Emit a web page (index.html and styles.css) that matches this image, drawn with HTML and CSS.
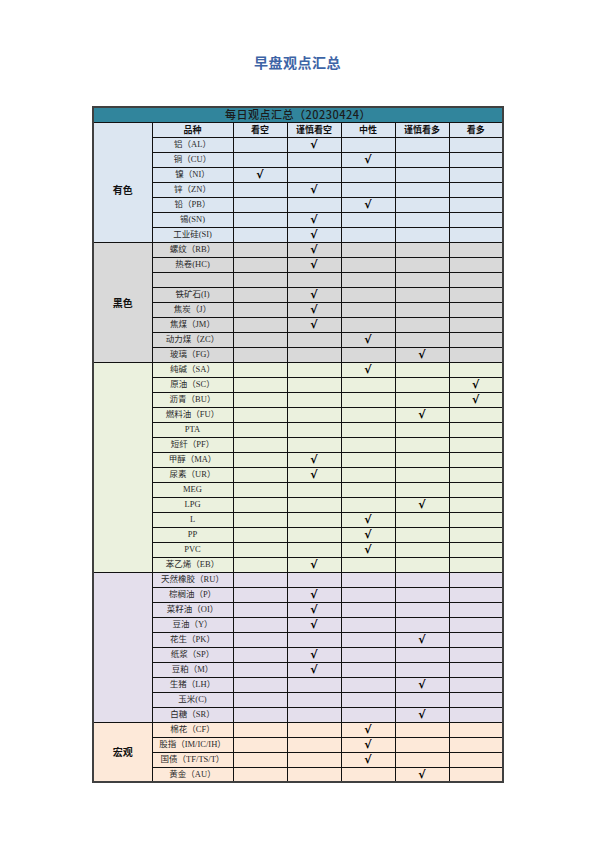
FILE: index.html
```html
<!DOCTYPE html>
<html lang="zh">
<head>
<meta charset="utf-8">
<title>早盘观点汇总</title>
<link rel="stylesheet" href="styles.css">
</head>
<body>
<div class="page">
  <h1 class="heading">早盘观点汇总</h1>
  <table class="summary">
    <colgroup>
      <col class="c-cat"><col class="c-prod"><col class="c-v"><col class="c-v"><col class="c-v"><col class="c-v"><col class="c-v">
    </colgroup>
    <thead>
      <tr class="title-row"><th colspan="7">每日观点汇总（20230424）</th></tr>
      <tr class="head-row">
        <th class="blank-head"></th><th>品种</th><th>看空</th><th>谨慎看空</th><th>中性</th><th>谨慎看多</th><th>看多</th>
      </tr>
    </thead>
    <tbody class="g-metal">
      <tr><td class="cat" rowspan="7">有色</td><td class="prod">铝（AL）</td><td></td><td>√</td><td></td><td></td><td></td></tr>
      <tr><td class="prod">铜（CU）</td><td></td><td></td><td>√</td><td></td><td></td></tr>
      <tr><td class="prod">镍（NI）</td><td>√</td><td></td><td></td><td></td><td></td></tr>
      <tr><td class="prod">锌（ZN）</td><td></td><td>√</td><td></td><td></td><td></td></tr>
      <tr><td class="prod">铅（PB）</td><td></td><td></td><td>√</td><td></td><td></td></tr>
      <tr><td class="prod">锡(SN)</td><td></td><td>√</td><td></td><td></td><td></td></tr>
      <tr><td class="prod">工业硅(SI)</td><td></td><td>√</td><td></td><td></td><td></td></tr>
    </tbody>
    <tbody class="g-black">
      <tr><td class="cat" rowspan="8">黑色</td><td class="prod">螺纹（RB）</td><td></td><td>√</td><td></td><td></td><td></td></tr>
      <tr><td class="prod">热卷(HC)</td><td></td><td>√</td><td></td><td></td><td></td></tr>
      <tr><td class="prod"></td><td></td><td></td><td></td><td></td><td></td></tr>
      <tr><td class="prod">铁矿石(I)</td><td></td><td>√</td><td></td><td></td><td></td></tr>
      <tr><td class="prod">焦炭（J）</td><td></td><td>√</td><td></td><td></td><td></td></tr>
      <tr><td class="prod">焦煤（JM）</td><td></td><td>√</td><td></td><td></td><td></td></tr>
      <tr><td class="prod">动力煤（ZC）</td><td></td><td></td><td>√</td><td></td><td></td></tr>
      <tr><td class="prod">玻璃（FG）</td><td></td><td></td><td></td><td>√</td><td></td></tr>
    </tbody>
    <tbody class="g-energy">
      <tr><td class="cat" rowspan="14"></td><td class="prod">纯碱（SA）</td><td></td><td></td><td>√</td><td></td><td></td></tr>
      <tr><td class="prod">原油（SC）</td><td></td><td></td><td></td><td></td><td>√</td></tr>
      <tr><td class="prod">沥青（BU）</td><td></td><td></td><td></td><td></td><td>√</td></tr>
      <tr><td class="prod">燃料油（FU）</td><td></td><td></td><td></td><td>√</td><td></td></tr>
      <tr><td class="prod">PTA</td><td></td><td></td><td></td><td></td><td></td></tr>
      <tr><td class="prod">短纤（PF）</td><td></td><td></td><td></td><td></td><td></td></tr>
      <tr><td class="prod">甲醇（MA）</td><td></td><td>√</td><td></td><td></td><td></td></tr>
      <tr><td class="prod">尿素（UR）</td><td></td><td>√</td><td></td><td></td><td></td></tr>
      <tr><td class="prod">MEG</td><td></td><td></td><td></td><td></td><td></td></tr>
      <tr><td class="prod">LPG</td><td></td><td></td><td></td><td>√</td><td></td></tr>
      <tr><td class="prod">L</td><td></td><td></td><td>√</td><td></td><td></td></tr>
      <tr><td class="prod">PP</td><td></td><td></td><td>√</td><td></td><td></td></tr>
      <tr><td class="prod">PVC</td><td></td><td></td><td>√</td><td></td><td></td></tr>
      <tr><td class="prod">苯乙烯（EB）</td><td></td><td>√</td><td></td><td></td><td></td></tr>
    </tbody>
    <tbody class="g-agri">
      <tr><td class="cat" rowspan="10"></td><td class="prod">天然橡胶（RU）</td><td></td><td></td><td></td><td></td><td></td></tr>
      <tr><td class="prod">棕榈油（P）</td><td></td><td>√</td><td></td><td></td><td></td></tr>
      <tr><td class="prod">菜籽油（OI）</td><td></td><td>√</td><td></td><td></td><td></td></tr>
      <tr><td class="prod">豆油（Y）</td><td></td><td>√</td><td></td><td></td><td></td></tr>
      <tr><td class="prod">花生（PK）</td><td></td><td></td><td></td><td>√</td><td></td></tr>
      <tr><td class="prod">纸浆（SP）</td><td></td><td>√</td><td></td><td></td><td></td></tr>
      <tr><td class="prod">豆粕（M）</td><td></td><td>√</td><td></td><td></td><td></td></tr>
      <tr><td class="prod">生猪（LH）</td><td></td><td></td><td></td><td>√</td><td></td></tr>
      <tr><td class="prod">玉米(C)</td><td></td><td></td><td></td><td></td><td></td></tr>
      <tr><td class="prod">白糖（SR）</td><td></td><td></td><td></td><td>√</td><td></td></tr>
    </tbody>
    <tbody class="g-macro">
      <tr><td class="cat" rowspan="4">宏观</td><td class="prod">棉花（CF）</td><td></td><td></td><td>√</td><td></td><td></td></tr>
      <tr><td class="prod">股指（IM/IC/IH）</td><td></td><td></td><td>√</td><td></td><td></td></tr>
      <tr><td class="prod">国债（TF/TS/T）</td><td></td><td></td><td>√</td><td></td><td></td></tr>
      <tr><td class="prod">黄金（AU）</td><td></td><td></td><td></td><td>√</td><td></td></tr>
    </tbody>
  </table>
</div>
</body>
</html>
```

FILE: styles.css
```css
* { box-sizing: border-box; }
html, body { margin: 0; padding: 0; background: #ffffff; }
.page {
  width: 595px;
  padding-top: 53px;
  font-family: "Liberation Serif", "Noto Sans CJK SC", serif;
}
.heading {
  margin: 0;
  text-align: center;
  font-family: "Noto Sans CJK SC", sans-serif;
  font-size: 14px;
  line-height: 18px;
  font-weight: 700;
  color: #3d64a6;
  letter-spacing: 0.5px;
}
.summary {
  margin: 35px 0 0 92px;
  width: 410px;
  border-collapse: collapse;
  table-layout: fixed;
  border: 2px solid #404040;
}
.c-cat { width: 59px; }
.c-prod { width: 81px; }
.c-v { width: 54px; }
.summary tr { height: 15px; }
.summary th, .summary td {
  padding: 0;
  border: 1.6px solid #111;
  text-align: center;
  vertical-align: middle;
  font-size: 9px;
  line-height: 11px;
  white-space: nowrap;
  overflow: hidden;
  color: #111;
}
.title-row th {
  background: #31859c;
  color: #1b1b1b;
  font-family: "Noto Sans CJK SC", sans-serif;
  font-size: 11px;
  font-weight: 500;
  letter-spacing: 0.5px;
  border-color: #404040 #404040 #111 #404040;
}
.head-row th {
  background: #dce6f1;
  font-family: "Noto Sans CJK SC", sans-serif;
  font-weight: 700;
  font-size: 9px;
}
.head-row .blank-head { border-bottom: none; }
.summary td {
  font-size: 11px;
  font-weight: 700;
  font-style: italic;
  font-family: "DejaVu Sans", sans-serif;
  color: #000;
}
.summary td.prod {
  font-family: "Liberation Serif", "Noto Sans CJK SC", serif;
  font-size: 8.5px;
  font-weight: 400;
  font-style: normal;
  color: #2a2a2a;
}
.summary td.cat {
  font-family: "Noto Sans CJK SC", sans-serif;
  font-size: 10px;
  font-weight: 700;
  font-style: normal;
  color: #111;
  border-top: none;
}
.g-metal td { background: #dce6f1; }
.g-black td { background: #d9d9d9; }
.g-energy td { background: #ebf1de; }
.g-agri td { background: #e4dfec; }
.g-macro td { background: #fde9d9; }
```
